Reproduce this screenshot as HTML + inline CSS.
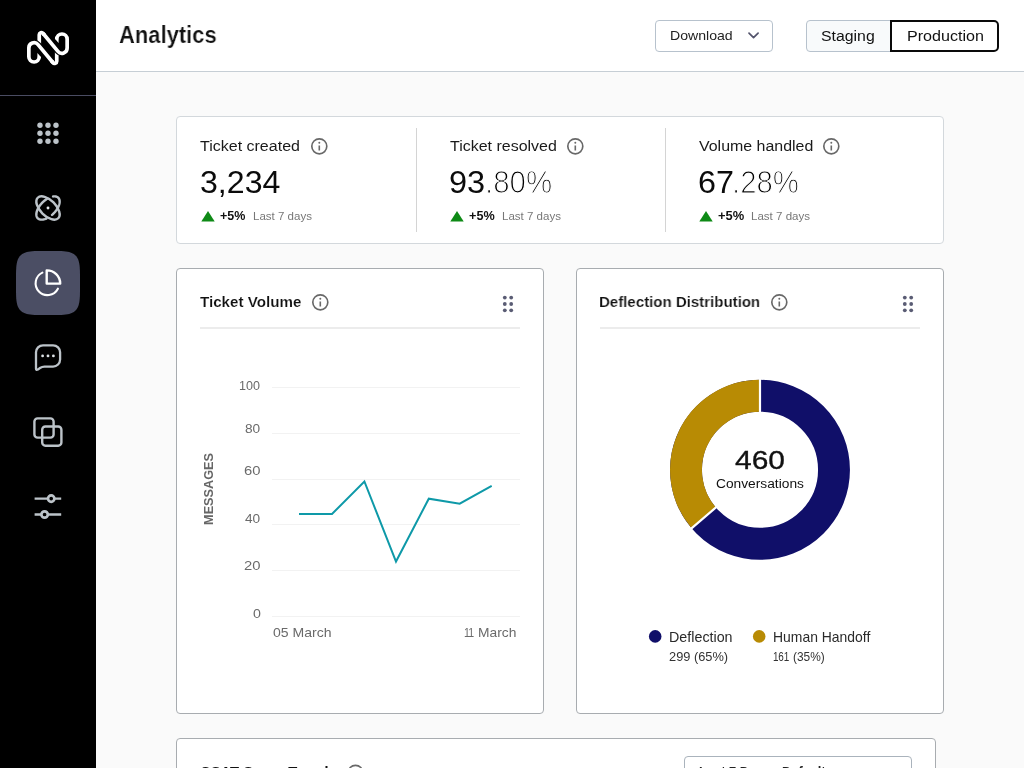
<!DOCTYPE html>
<html lang="en">
<head>
<meta charset="utf-8">
<title>Analytics</title>
<style>
*{box-sizing:border-box;margin:0;padding:0}
html,body{width:1024px;height:768px;overflow:hidden;background:#fafafa;font-family:"Liberation Sans",sans-serif;color:#111}
.abs{position:absolute}
.tx{position:absolute;white-space:nowrap;transform-origin:0 50%}
#root{position:absolute;left:0;top:0;width:1024px;height:768px;overflow:hidden;will-change:transform}
#side{position:absolute;left:0;top:0;width:96px;height:768px;background:#000}
#sideline{position:absolute;left:0;top:95px;width:96px;height:1px;background:#4a4c62}
#head{position:absolute;left:96px;top:0;width:928px;height:72px;background:#fff;border-bottom:1px solid #c6ced5}
#dl{position:absolute;left:655px;top:20px;width:118px;height:32px;border:1px solid #b7c2cd;border-radius:4px;background:#fff}
#stg{position:absolute;left:806px;top:20px;width:85px;height:32px;border:1px solid #b7c2cd;border-radius:4px 0 0 4px;background:#f8fafb}
#prd{position:absolute;left:890px;top:20px;width:109px;height:32px;border:2px solid #0a0a0a;border-radius:0 5px 5px 0;background:#fff}
.card{position:absolute;background:#fff;border:1px solid #d3d8dc;border-radius:4px}
.card2{position:absolute;background:#fff;border:1px solid #a8acb0;border-radius:4px}
.vdiv{position:absolute;width:1px;top:128px;height:104px;background:#d4d4d4}
.hr{position:absolute;top:327px;height:2px;width:320px;background:#ececec}
.grid{position:absolute;left:272px;width:248px;height:1px;background:#f2f2f2}
svg{position:absolute;overflow:visible}
</style>
</head>
<body>
<div id="root">
<div id="side"></div>
<div id="sideline"></div>
<div id="head"></div>
<div id="dl"></div>
<div id="stg"></div><div id="prd"></div>
<div class="card" style="left:176px;top:116px;width:768px;height:128px"></div>
<div class="vdiv" style="left:416px"></div>
<div class="vdiv" style="left:665px"></div>
<div class="card2" style="left:176px;top:268px;width:368px;height:446px"></div>
<div class="card2" style="left:576px;top:268px;width:368px;height:446px"></div>
<div class="hr" style="left:200px"></div>
<div class="hr" style="left:600px"></div>
<div class="grid" style="top:387px"></div>
<div class="grid" style="top:433px"></div>
<div class="grid" style="top:479px"></div>
<div class="grid" style="top:524px"></div>
<div class="grid" style="top:570px"></div>
<div class="grid" style="top:616px"></div>
<div class="card2" style="left:176px;top:738px;width:760px;height:60px"></div>
<div class="abs" style="left:684px;top:756px;width:228px;height:32px;border:1px solid #aab3bc;border-radius:4px;background:#fff"></div>
<div class="tx" id="ylab" style="left:208.5px;top:488.7px;font-size:13.4px;line-height:16px;font-weight:bold;color:#666;letter-spacing:0px;transform-origin:50% 50%;transform:translate(-50%,-50%) rotate(-90deg) scaleX(0.946)">MESSAGES</div>
<div class="tx" id="title" style="left:119.32px;top:20px;line-height:30px;font-size:23.5px;font-weight:bold;color:#111;transform:scaleX(0.9345);-webkit-text-stroke:0.2px #fff;">Analytics</div>
<div class="tx" id="dltxt" style="left:670.05px;top:26px;line-height:19px;font-size:13.4px;font-weight:normal;color:#222;transform:scaleX(1.0517);">Download</div>
<div class="tx" id="stgtxt" style="left:821.08px;top:25px;line-height:21px;font-size:15.5px;font-weight:normal;color:#111;transform:scaleX(1.0216);">Staging</div>
<div class="tx" id="prdtxt" style="left:906.66px;top:25px;line-height:21px;font-size:15.5px;font-weight:normal;color:#111;transform:scaleX(1.0389);">Production</div>
<div class="tx" id="l1" style="left:200.40px;top:135px;line-height:21px;font-size:15.4px;font-weight:normal;color:#1a1a1a;transform:scaleX(1.0400);">Ticket created</div>
<div class="tx" id="l2" style="left:449.50px;top:135px;line-height:21px;font-size:15.4px;font-weight:normal;color:#1a1a1a;transform:scaleX(1.0382);">Ticket resolved</div>
<div class="tx" id="l3" style="left:698.50px;top:135px;line-height:21px;font-size:15.4px;font-weight:normal;color:#1a1a1a;transform:scaleX(1.0358);">Volume handled</div>
<div class="tx" id="b1" style="left:199.75px;top:163px;line-height:38px;font-size:30.5px;font-weight:normal;color:#0b0b0b;transform:scaleX(1.0527);">3,234</div>
<div class="tx" id="b2" style="left:449.13px;top:163px;line-height:38px;font-size:30.5px;font-weight:normal;color:#0b0b0b;transform:scaleX(1.0656);">93</div>
<div class="tx" id="b2t" style="left:484.60px;top:163px;line-height:38px;font-size:30.5px;font-weight:normal;color:#000;transform:scaleX(0.9667);-webkit-text-stroke:1.15px #fff;">.80%</div>
<div class="tx" id="b3" style="left:697.84px;top:163px;line-height:38px;font-size:30.5px;font-weight:normal;color:#0b0b0b;transform:scaleX(1.0594);">67</div>
<div class="tx" id="b3t" style="left:732.01px;top:163px;line-height:38px;font-size:30.5px;font-weight:normal;color:#000;transform:scaleX(0.9636);-webkit-text-stroke:1.15px #fff;">.28%</div>
<div class="tx" id="p1" style="left:220.20px;top:206px;line-height:19px;font-size:13.5px;font-weight:bold;color:#111;transform:scaleX(0.9259);">+5%</div>
<div class="tx" id="p2" style="left:469.30px;top:206px;line-height:19px;font-size:13.5px;font-weight:bold;color:#111;transform:scaleX(0.9370);">+5%</div>
<div class="tx" id="p3" style="left:718.00px;top:206px;line-height:19px;font-size:13.5px;font-weight:bold;color:#111;transform:scaleX(0.9556);">+5%</div>
<div class="tx" id="d1" style="left:253.47px;top:208px;line-height:16px;font-size:11.2px;font-weight:normal;color:#777;transform:scaleX(1.0304);">Last 7 days</div>
<div class="tx" id="d2" style="left:502.47px;top:208px;line-height:16px;font-size:11.2px;font-weight:normal;color:#777;transform:scaleX(1.0304);">Last 7 days</div>
<div class="tx" id="d3" style="left:751.37px;top:208px;line-height:16px;font-size:11.2px;font-weight:normal;color:#777;transform:scaleX(1.0321);">Last 7 days</div>
<div class="tx" id="t1" style="left:200.10px;top:291px;line-height:21px;font-size:15.4px;font-weight:bold;color:#111;transform:scaleX(0.9843);-webkit-text-stroke:0.15px #fff;">Ticket Volume</div>
<div class="tx" id="t2" style="left:599.02px;top:291px;line-height:21px;font-size:15.4px;font-weight:bold;color:#111;transform:scaleX(0.9767);-webkit-text-stroke:0.15px #fff;">Deflection Distribution</div>
<div class="tx" id="a100" style="left:238.71px;top:377px;line-height:18px;font-size:12px;font-weight:normal;color:#6a6a6a;transform:scaleX(1.0447);">100</div>
<div class="tx" id="a80" style="left:244.80px;top:420px;line-height:18px;font-size:12px;font-weight:normal;color:#6a6a6a;transform:scaleX(1.1385);">80</div>
<div class="tx" id="a60" style="left:243.57px;top:462px;line-height:18px;font-size:12px;font-weight:normal;color:#6a6a6a;transform:scaleX(1.2333);">60</div>
<div class="tx" id="a40" style="left:244.80px;top:510px;line-height:18px;font-size:12px;font-weight:normal;color:#6a6a6a;transform:scaleX(1.1385);">40</div>
<div class="tx" id="a20" style="left:243.57px;top:557px;line-height:18px;font-size:12px;font-weight:normal;color:#6a6a6a;transform:scaleX(1.2333);">20</div>
<div class="tx" id="a0" style="left:252.50px;top:605px;line-height:18px;font-size:12px;font-weight:normal;color:#6a6a6a;transform:scaleX(1.1833);">0</div>
<div class="tx" id="x1" style="left:273.20px;top:623px;line-height:19px;font-size:13.2px;font-weight:normal;color:#6a6a6a;transform:scaleX(1.0648);">05 March</div>
<div class="tx" id="x2" style="left:463.60px;top:623px;line-height:19px;font-size:13.2px;font-weight:normal;color:#6a6a6a;transform:scaleX(0.8000);letter-spacing:-1.000px;">11</div>
<div class="tx" id="x2b" style="left:477.55px;top:623px;line-height:19px;font-size:13.2px;font-weight:normal;color:#6a6a6a;transform:scaleX(1.0457);">March</div>
<div class="tx" id="n460" style="left:735.20px;top:443px;line-height:34px;font-size:26px;font-weight:normal;color:#111;transform:scaleX(1.1500);-webkit-text-stroke:0.35px #111;">460</div>
<div class="tx" id="conv" style="left:716.00px;top:474px;line-height:19px;font-size:13.7px;font-weight:normal;color:#111;transform:scaleX(1.0047);">Conversations</div>
<div class="tx" id="g1" style="left:668.81px;top:627px;line-height:20px;font-size:14.4px;font-weight:normal;color:#2a2a2a;transform:scaleX(0.9935);">Deflection</div>
<div class="tx" id="g2" style="left:773.03px;top:627px;line-height:20px;font-size:14.4px;font-weight:normal;color:#2a2a2a;transform:scaleX(0.9680);">Human Handoff</div>
<div class="tx" id="g3" style="left:668.77px;top:648px;line-height:18px;font-size:12.4px;font-weight:normal;color:#333;transform:scaleX(1.0345);">299 (65%)</div>
<div class="tx" id="g4" style="left:773.20px;top:648px;line-height:18px;font-size:12.4px;font-weight:normal;color:#333;transform:scaleX(0.8000);letter-spacing:-0.250px;">161</div>
<div class="tx" id="g4b" style="left:792.54px;top:648px;line-height:18px;font-size:12.4px;font-weight:normal;color:#333;transform:scaleX(0.9613);">(35%)</div>
<div class="tx" id="t3" style="left:199.74px;top:761px;line-height:21px;font-size:15.4px;font-weight:bold;color:#111;transform:scaleX(0.9596);">CSAT Score Trends</div>
<div class="tx" id="sel" style="left:699.08px;top:762px;line-height:20px;font-size:14px;font-weight:bold;color:#222;transform:scaleX(0.9197);">Last 7 Days - Default</div>
<svg id="gfx" width="1024" height="768" viewBox="0 0 1024 768" style="left:0;top:0">
  <!-- logo -->
  <g fill="none" stroke-linecap="butt" stroke-linejoin="round">
    <path stroke="#fff" stroke-width="3.70" d="M51.58 61.01 L52.86 62.55 A2.20 2.20 0 0 0 56.75 61.15 V51.00 M44.42 34.99 L43.14 33.45 A2.20 2.20 0 0 0 39.25 34.85 V45.00"/>
    <path stroke="#000" stroke-width="6.10" d="M34.05 42.80 A5.20 5.20 0 0 1 38.05 44.68 L41.24 48.53 M61.95 53.20 A5.20 5.20 0 0 1 57.95 51.32 L54.76 47.47"/>
    <path stroke="#fff" stroke-width="3.70" d="M39.25 56.80 A5.20 5.20 0 0 1 28.85 56.80 V48.00 A5.20 5.20 0 0 1 38.05 44.68 L52.86 62.55 M56.75 39.20 A5.20 5.20 0 0 1 67.15 39.20 V48.00 A5.20 5.20 0 0 1 57.95 51.32 L43.14 33.45"/>
    <path fill="#fff" stroke="none" d="M37.40 57.26 L37.40 53.10 L41.10 57.21 L41.10 57.26 Z M58.60 38.74 L58.60 42.90 L54.90 38.79 L54.90 38.74 Z"/>
  </g>
  <!-- active bg -->
  <path d="M80.00 283.00 L79.97 292.78 L79.88 296.20 L79.73 298.72 L79.52 300.78 L79.25 302.54 L78.92 304.08 L78.52 305.44 L78.06 306.67 L77.53 307.78 L76.94 308.79 L76.27 309.70 L75.52 310.52 L74.70 311.27 L73.79 311.94 L72.78 312.53 L71.67 313.06 L70.44 313.52 L69.08 313.92 L67.54 314.25 L65.78 314.52 L63.72 314.73 L61.20 314.88 L57.78 314.97 L48.00 315.00 L38.22 314.97 L34.80 314.88 L32.28 314.73 L30.22 314.52 L28.46 314.25 L26.92 313.92 L25.56 313.52 L24.33 313.06 L23.22 312.53 L22.21 311.94 L21.30 311.27 L20.48 310.52 L19.73 309.70 L19.06 308.79 L18.47 307.78 L17.94 306.67 L17.48 305.44 L17.08 304.08 L16.75 302.54 L16.48 300.78 L16.27 298.72 L16.12 296.20 L16.03 292.78 L16.00 283.00 L16.03 273.22 L16.12 269.80 L16.27 267.28 L16.48 265.22 L16.75 263.46 L17.08 261.92 L17.48 260.56 L17.94 259.33 L18.47 258.22 L19.06 257.21 L19.73 256.30 L20.48 255.48 L21.30 254.73 L22.21 254.06 L23.22 253.47 L24.33 252.94 L25.56 252.48 L26.92 252.08 L28.46 251.75 L30.22 251.48 L32.28 251.27 L34.80 251.12 L38.22 251.03 L48.00 251.00 L57.78 251.03 L61.20 251.12 L63.72 251.27 L65.78 251.48 L67.54 251.75 L69.08 252.08 L70.44 252.48 L71.67 252.94 L72.78 253.47 L73.79 254.06 L74.70 254.73 L75.52 255.48 L76.27 256.30 L76.94 257.21 L77.53 258.22 L78.06 259.33 L78.52 260.56 L78.92 261.92 L79.25 263.46 L79.52 265.22 L79.73 267.28 L79.88 269.80 L79.97 273.22 Z" fill="#4b4e64"/>
  <!-- grid dots -->
  <g fill="#bcc3c9">
    <circle cx="40" cy="125.3" r="2.7"/><circle cx="48" cy="125.3" r="2.7"/><circle cx="56" cy="125.3" r="2.7"/>
    <circle cx="40" cy="133.3" r="2.7"/><circle cx="48" cy="133.3" r="2.7"/><circle cx="56" cy="133.3" r="2.7"/>
    <circle cx="40" cy="141.3" r="2.7"/><circle cx="48" cy="141.3" r="2.7"/><circle cx="56" cy="141.3" r="2.7"/>
  </g>
  <!-- atom -->
  <g fill="none" stroke="#bcc3c9" stroke-width="2.45" stroke-linecap="round" stroke-linejoin="round">
    <path d="M53.05 196.46 L53.66 196.39 L54.24 196.36 L54.81 196.37 L55.35 196.41 L55.86 196.50 L56.35 196.63 L56.81 196.79 L57.24 197.00 L57.64 197.24 L58.00 197.52 L58.33 197.83 L58.63 198.18 L58.89 198.56 L59.11 198.97 L59.30 199.42 L59.44 199.89 L59.55 200.40 L59.61 200.93 L59.64 201.48 L59.63 202.05 L59.58 202.65 L59.49 203.26 L59.35 203.89 L59.18 204.53 L58.98 205.19 L58.73 205.85 L58.45 206.53 L58.13 207.20 L57.78 207.88 L57.39 208.56 L56.97 209.24 L56.53 209.92 L56.05 210.58 L55.54 211.24 L55.01 211.89 L54.46 212.53 L53.88 213.15 L53.28 213.75 L52.67 214.33 L52.03 214.89 M46.44 218.49 L45.58 218.83 L44.75 219.12 L43.93 219.35 L43.13 219.51 L42.36 219.61 L41.62 219.64 L40.92 219.61 L40.25 219.52 L39.63 219.37 L39.05 219.15 L38.52 218.87 L38.05 218.53 L37.63 218.13 L37.27 217.68 L36.96 217.17 L36.72 216.61 L36.54 216.01 L36.42 215.36 L36.36 214.67 L36.37 213.95 L36.44 213.19 L36.58 212.40 L36.78 211.59 L37.04 210.76 L37.36 209.92 L37.74 209.06 L38.18 208.20 L38.67 207.33 L39.21 206.47 L39.80 205.62 L40.43 204.79 L41.11 203.97 L41.83 203.17 L42.57 202.40 L43.35 201.65 L44.16 200.95 L44.98 200.28 L45.82 199.66 L46.68 199.08 L47.54 198.55"/>
    <ellipse cx="48" cy="208" rx="14.5" ry="7.8" transform="rotate(45 48 208)"/>
  </g>
  <circle cx="48" cy="208" r="1.45" fill="#e3e7ea"/>
  <!-- pie -->
  <g fill="none" stroke="#fff" stroke-linejoin="round" stroke-linecap="round">
    <path stroke-width="2.1" d="M42.4 272.6 A11.8 11.8 0 1 0 57.9 288.7"/>
    <path stroke-width="2.4" d="M46.7 270.4 A13.3 13.3 0 0 1 60.2 283.6 H46.7 Z"/>
  </g>
  <!-- chat -->
  <g fill="none" stroke="#bcc3c9" stroke-width="2.3" stroke-linejoin="round">
    <path d="M43 345.3 H53.1 A7 7 0 0 1 60.1 352.3 V359.6 A7 7 0 0 1 53.1 366.6 H44.5 Q42 366.6 40 368 L37.8 369.6 Q36 370.6 36 368.5 V352.3 A7 7 0 0 1 43 345.3 Z"/>
  </g>
  <g fill="#dde2e6"><circle cx="42.6" cy="355.9" r="1.4"/><circle cx="48" cy="355.9" r="1.4"/><circle cx="53.4" cy="355.9" r="1.4"/></g>
  <!-- squares -->
  <g fill="none" stroke="#bcc3c9" stroke-width="2.4">
    <rect x="34.4" y="418.4" width="19.2" height="19.2" rx="3.2"/>
    <rect x="42.2" y="426.5" width="19.2" height="19.2" rx="3.2"/>
  </g>
  <!-- sliders -->
  <g fill="none" stroke="#bcc3c9" stroke-width="2.4" stroke-linecap="butt">
    <path d="M34.6 498.6 H48 M54.4 498.6 H61.2 M34.6 514.5 H41.4 M47.8 514.5 H61.2"/>
    <circle cx="51.2" cy="498.6" r="3.2" stroke-width="2.7"/>
    <circle cx="44.6" cy="514.5" r="3.2" stroke-width="2.7"/>
  </g>
  <!-- chevron -->
  <path d="M749 33.2 L753.55 37.7 L758.1 33.2" fill="none" stroke="#53546c" stroke-width="1.7" stroke-linecap="round" stroke-linejoin="round"/>
  <!-- info icons -->
  <g fill="none" stroke="#686868" stroke-width="1.65">
    <circle cx="319.3" cy="146.3" r="7.5"/><circle cx="575.3" cy="146.3" r="7.5"/><circle cx="831.3" cy="146.3" r="7.5"/>
    <circle cx="320.3" cy="302.3" r="7.5"/><circle cx="779.3" cy="302.3" r="7.5"/><circle cx="355.5" cy="772.8" r="7.5"/>
  </g>
  <g stroke="#6a6a6a" stroke-width="1.6" stroke-linecap="butt">
    <path d="M319.3 145.5 V150.5 M575.3 145.5 V150.5 M831.3 145.5 V150.5 M320.3 301.5 V306.5 M779.3 301.5 V306.5"/>
  </g>
  <g fill="#6a6a6a">
    <circle cx="319.3" cy="142.8" r="1"/><circle cx="575.3" cy="142.8" r="1"/><circle cx="831.3" cy="142.8" r="1"/>
    <circle cx="320.3" cy="298.8" r="1"/><circle cx="779.3" cy="298.8" r="1"/>
  </g>
  <!-- triangles -->
  <g fill="#0e8a16">
    <path d="M201.3 221.5 L208 211 L214.7 221.5 Z"/>
    <path d="M450.3 221.5 L457 211 L463.7 221.5 Z"/>
    <path d="M699.3 221.5 L706 211 L712.7 221.5 Z"/>
  </g>
  <!-- drag handles -->
  <g fill="#5a5c74"><circle cx="504.8" cy="297.6" r="1.9"/><circle cx="511.2" cy="297.6" r="1.9"/><circle cx="504.8" cy="304.0" r="1.9"/><circle cx="511.2" cy="304.0" r="1.9"/><circle cx="504.8" cy="310.3" r="1.9"/><circle cx="511.2" cy="310.3" r="1.9"/><circle cx="904.8" cy="297.6" r="1.9"/><circle cx="911.2" cy="297.6" r="1.9"/><circle cx="904.8" cy="304.0" r="1.9"/><circle cx="911.2" cy="304.0" r="1.9"/><circle cx="904.8" cy="310.3" r="1.9"/><circle cx="911.2" cy="310.3" r="1.9"/></g>
  <!-- line chart -->
  <polyline points="299,514 332,514 364.4,481.5 396,561.5 428.8,498.7 459.7,503.7 491.7,485.8" fill="none" stroke="#0e99a8" stroke-width="2" stroke-linejoin="miter"/>
  <!-- donut -->
  <g transform="translate(760 469.8)">
    <circle r="74" fill="none" stroke="#100f69" stroke-width="31.9"/>
    <path d="M0 -74 A74 74 0 0 0 -56.27 48.06" fill="none" stroke="#b88b04" stroke-width="31.9"/>
    <path d="M0 -56 V-92 M-42.58 36.37 L-69.96 59.75" stroke="#fff" stroke-width="2.2" fill="none"/>
  </g>
  <!-- legend dots -->
  <circle cx="655.2" cy="636.4" r="6.3" fill="#100f69"/>
  <circle cx="759.2" cy="636.4" r="6.3" fill="#b88b04"/>
</svg>
</div>
</body>
</html>
